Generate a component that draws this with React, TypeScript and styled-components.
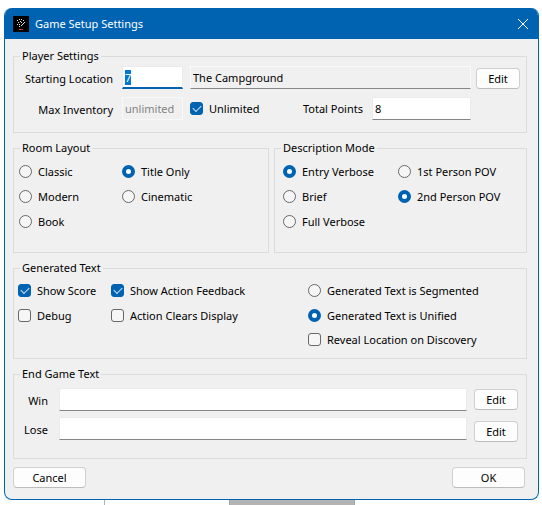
import React, { useEffect, useRef } from "react";
import styled, { createGlobalStyle, css } from "styled-components";

const BLUE = "#0063b1";
const FACE = "#f0f0f0";
const LINE = "#dcdcdc";

const GlobalStyle = createGlobalStyle`
  * { box-sizing: border-box; }
  body {
    margin: 0;
    background: #fff;
    color: #000;
    font: 11px/16px "Noto Sans", "Open Sans", sans-serif;
  }
  input, button { font: inherit; color: inherit; margin: 0; }
`;

const Desktop = styled.main`
  padding: 8px 3px 0 4px;
`;

const Dialog = styled.form`
  border: 1px solid ${BLUE};
  border-top: 0;
  border-radius: 8px;
  background: ${FACE};
  overflow: hidden;
`;

const TitleBar = styled.header`
  display: flex;
  align-items: center;
  gap: 6px;
  height: 31px;
  padding: 0 10px 0 8px;
  background: ${BLUE};
  color: #fff;
`;

const Title = styled.h1`
  flex: 1;
  margin: 0;
  font-size: 11px;
  font-weight: 400;
`;

const CloseButton = styled.button`
  display: flex;
  padding: 0;
  border: 0;
  background: none;
  color: #fff;
`;

const Body = styled.div`
  display: flex;
  flex-direction: column;
  gap: 7px;
  padding: 9px 11px 11px 8px;
`;

const Group = styled.fieldset`
  min-width: 0;
  margin: 0;
  padding: 0;
  border: 1px solid ${LINE};
`;

const Legend = styled.legend`
  height: 16px;
  margin-left: 6px;
  padding: 0 2px;
`;

const SideBySide = styled.div`
  display: grid;
  grid-template-columns: 256fr 253fr;
  gap: 5px;
`;

const PlayerGrid = styled.div`
  display: grid;
  grid-template-columns: 103px 63px 1fr 44px;
  gap: 8px 5px;
  padding: 2px 6px 12px 0;
  align-items: end;
`;

const FieldLabel = styled.label`
  align-self: center;
  padding: 2px 4px 0 0;
  text-align: right;
`;

const TextField = styled.input<{ $width?: number }>`
  width: ${(p) => (p.$width ? `${p.$width}px` : "100%")};
  min-width: 0;
  height: 23px;
  padding: 0 2px 1px;
  border: 1px solid #ebebeb;
  border-bottom-color: #868686;
  border-radius: 0;
  background: #fff;
  outline: none;

  &:read-only {
    background: ${FACE};
    border-color: #fafafa;
    border-bottom-color: #868686;
  }
  &:disabled {
    background: ${FACE};
    border-color: #f8f8f8;
    color: #838383;
  }
  &:focus {
    border-bottom: 2px solid ${BLUE};
    padding-bottom: 0;
  }
  &::selection {
    background: #0078d7;
    color: #fff;
  }
`;

const PointsCell = styled.div`
  display: flex;
  align-items: center;
  justify-content: space-between;
`;

const PointsLabel = styled.label`
  display: flex;
  align-items: center;
  gap: 9px;
`;

const PushButton = styled.button<{ $wide?: boolean }>`
  width: ${(p) => (p.$wide ? 73 : 44)}px;
  height: 21px;
  padding: 0;
  border: 1px solid #d0d0d0;
  border-bottom-color: #bcbcbc;
  border-radius: 4px;
  background: #fdfdfd;
  line-height: 18px;
`;

const ChoiceGrid = styled.div<{ $columns: string; $pad: string }>`
  display: grid;
  grid-template-columns: ${(p) => p.$columns};
  padding: ${(p) => p.$pad};
`;

const ChoiceLabel = styled.label<{ $tall?: boolean }>`
  display: flex;
  align-items: center;
  gap: 6px;
  height: ${(p) => (p.$tall === false ? 23 : 25)}px;
  white-space: nowrap;
`;

const mark = css`
  appearance: none;
  display: grid;
  place-items: center;
  flex: none;
  width: 13px;
  height: 13px;
  border: 1px solid #686868;
  background: #f6f6f6;
`;

const Radio = styled.input`
  ${mark}
  border-radius: 50%;

  &:checked {
    border: 4px solid ${BLUE};
    background: #fff;
  }
`;

const Check = styled.input`
  ${mark}
  border-radius: 3px;

  &:checked {
    border-color: ${BLUE};
    background: ${BLUE};
  }
  &:checked::after {
    content: "";
    width: 7px;
    height: 4px;
    margin-bottom: 2px;
    border: solid #d5e5f3;
    border-width: 0 0 1px 1px;
    transform: rotate(-45deg);
  }
`;

const EndGame = styled.div`
  display: flex;
  gap: 7px;
  padding: 6px 8px 16px 0;
`;

const EndFields = styled.div`
  flex: 1;
  display: grid;
  grid-template-columns: 38px 1fr;
  grid-auto-rows: 23px;
  gap: 6px 7px;
`;

const EndButtons = styled.div`
  display: flex;
  flex-direction: column;
  gap: 11px;
  padding-top: 1px;
`;

const Footer = styled.footer`
  display: flex;
  justify-content: space-between;
  padding: 1px 2px 0 0;
`;

const Backdrop = styled.div`
  display: flex;
  height: 5px;
  padding-left: 100px;
`;

const BackdropRule = styled.div`
  width: 125px;
  border-left: 1px solid #a5b4c0;
`;

const BackdropBlock = styled.div`
  width: 126px;
  border: solid #8fa6b8;
  border-width: 0 1px;
  background: #b4b4b4;
`;

function AppIcon() {
  const dots: [number, number][] = [
    [6, 3], [8, 3], [4, 4], [10, 4], [5, 6], [7, 5], [11, 6],
    [4, 8], [8, 6], [9, 8], [10, 7], [6, 8], [8, 9], [6, 10],
  ];
  return (
    <svg width="16" height="16" viewBox="0 0 16 16" aria-hidden="true">
      <rect width="16" height="16" fill="#000" />
      {dots.map(([x, y]) => (
        <rect key={`${x}-${y}`} x={x} y={y} width="1" height="1" fill="#e0e0e0" />
      ))}
      <rect x="6" y="13" width="2" height="1" fill="#d8402a" />
      <rect x="8" y="13" width="2" height="1" fill="#b03020" />
    </svg>
  );
}

type ChoiceProps = {
  label: string;
  name?: string;
  on?: boolean;
  compact?: boolean;
};

function Choice({ label, name, on, compact }: ChoiceProps) {
  return (
    <ChoiceLabel $tall={!compact}>
      {name ? (
        <Radio type="radio" name={name} defaultChecked={on} />
      ) : (
        <Check type="checkbox" defaultChecked={on} />
      )}
      {label}
    </ChoiceLabel>
  );
}

export default function App() {
  const location = useRef<HTMLInputElement>(null);

  useEffect(() => {
    location.current?.focus();
    location.current?.select();
  }, []);

  return (
    <>
      <GlobalStyle />
      <Desktop>
        <Dialog onSubmit={(e) => e.preventDefault()}>
          <TitleBar>
            <AppIcon />
            <Title>Game Setup Settings</Title>
            <CloseButton type="button" aria-label="Close">
              <svg width="10" height="10" viewBox="0 0 10 10">
                <path d="M0 0L10 10M10 0L0 10" stroke="currentColor" />
              </svg>
            </CloseButton>
          </TitleBar>

          <Body>
            <Group>
              <Legend>Player Settings</Legend>
              <PlayerGrid>
                <FieldLabel htmlFor="location">Starting Location</FieldLabel>
                <TextField id="location" ref={location} $width={61} defaultValue="7" />
                <TextField aria-label="Location name" readOnly value="The Campground" />
                <PushButton type="button">Edit</PushButton>
                <FieldLabel htmlFor="inventory">Max Inventory</FieldLabel>
                <TextField id="inventory" disabled $width={61} value="unlimited" />
                <PointsCell>
                  <Choice label="Unlimited" on compact />
                  <PointsLabel>
                    Total Points
                    <TextField $width={99} defaultValue="8" />
                  </PointsLabel>
                </PointsCell>
              </PlayerGrid>
            </Group>

            <SideBySide>
              <Group>
                <Legend>Room Layout</Legend>
                <ChoiceGrid $columns="103px 1fr" $pad="3px 5px 18px">
                  <Choice name="layout" label="Classic" />
                  <Choice name="layout" label="Title Only" on />
                  <Choice name="layout" label="Modern" />
                  <Choice name="layout" label="Cinematic" />
                  <Choice name="layout" label="Book" />
                </ChoiceGrid>
              </Group>
              <Group>
                <Legend>Description Mode</Legend>
                <ChoiceGrid $columns="115px 1fr" $pad="3px 8px 18px">
                  <Choice name="verbosity" label="Entry Verbose" on />
                  <Choice name="pov" label="1st Person POV" />
                  <Choice name="verbosity" label="Brief" />
                  <Choice name="pov" label="2nd Person POV" on />
                  <Choice name="verbosity" label="Full Verbose" />
                </ChoiceGrid>
              </Group>
            </SideBySide>

            <Group>
              <Legend>Generated Text</Legend>
              <ChoiceGrid $columns="93px 197px 1fr" $pad="2px 4px 7px">
                <div>
                  <Choice label="Show Score" on />
                  <Choice label="Debug" />
                </div>
                <div>
                  <Choice label="Show Action Feedback" on />
                  <Choice label="Action Clears Display" />
                </div>
                <div>
                  <Choice name="generated" label="Generated Text is Segmented" />
                  <Choice name="generated" label="Generated Text is Unified" on />
                  <Choice label="Reveal Location on Discovery" compact />
                </div>
              </ChoiceGrid>
            </Group>

            <Group>
              <Legend>End Game Text</Legend>
              <EndGame>
                <EndFields>
                  <FieldLabel htmlFor="win">Win</FieldLabel>
                  <TextField id="win" />
                  <FieldLabel htmlFor="lose">Lose</FieldLabel>
                  <TextField id="lose" />
                </EndFields>
                <EndButtons>
                  <PushButton type="button">Edit</PushButton>
                  <PushButton type="button">Edit</PushButton>
                </EndButtons>
              </EndGame>
            </Group>

            <Footer>
              <PushButton type="button" $wide>Cancel</PushButton>
              <PushButton type="submit" $wide>OK</PushButton>
            </Footer>
          </Body>
        </Dialog>
        <Backdrop>
          <BackdropRule />
          <BackdropBlock />
        </Backdrop>
      </Desktop>
    </>
  );
}
